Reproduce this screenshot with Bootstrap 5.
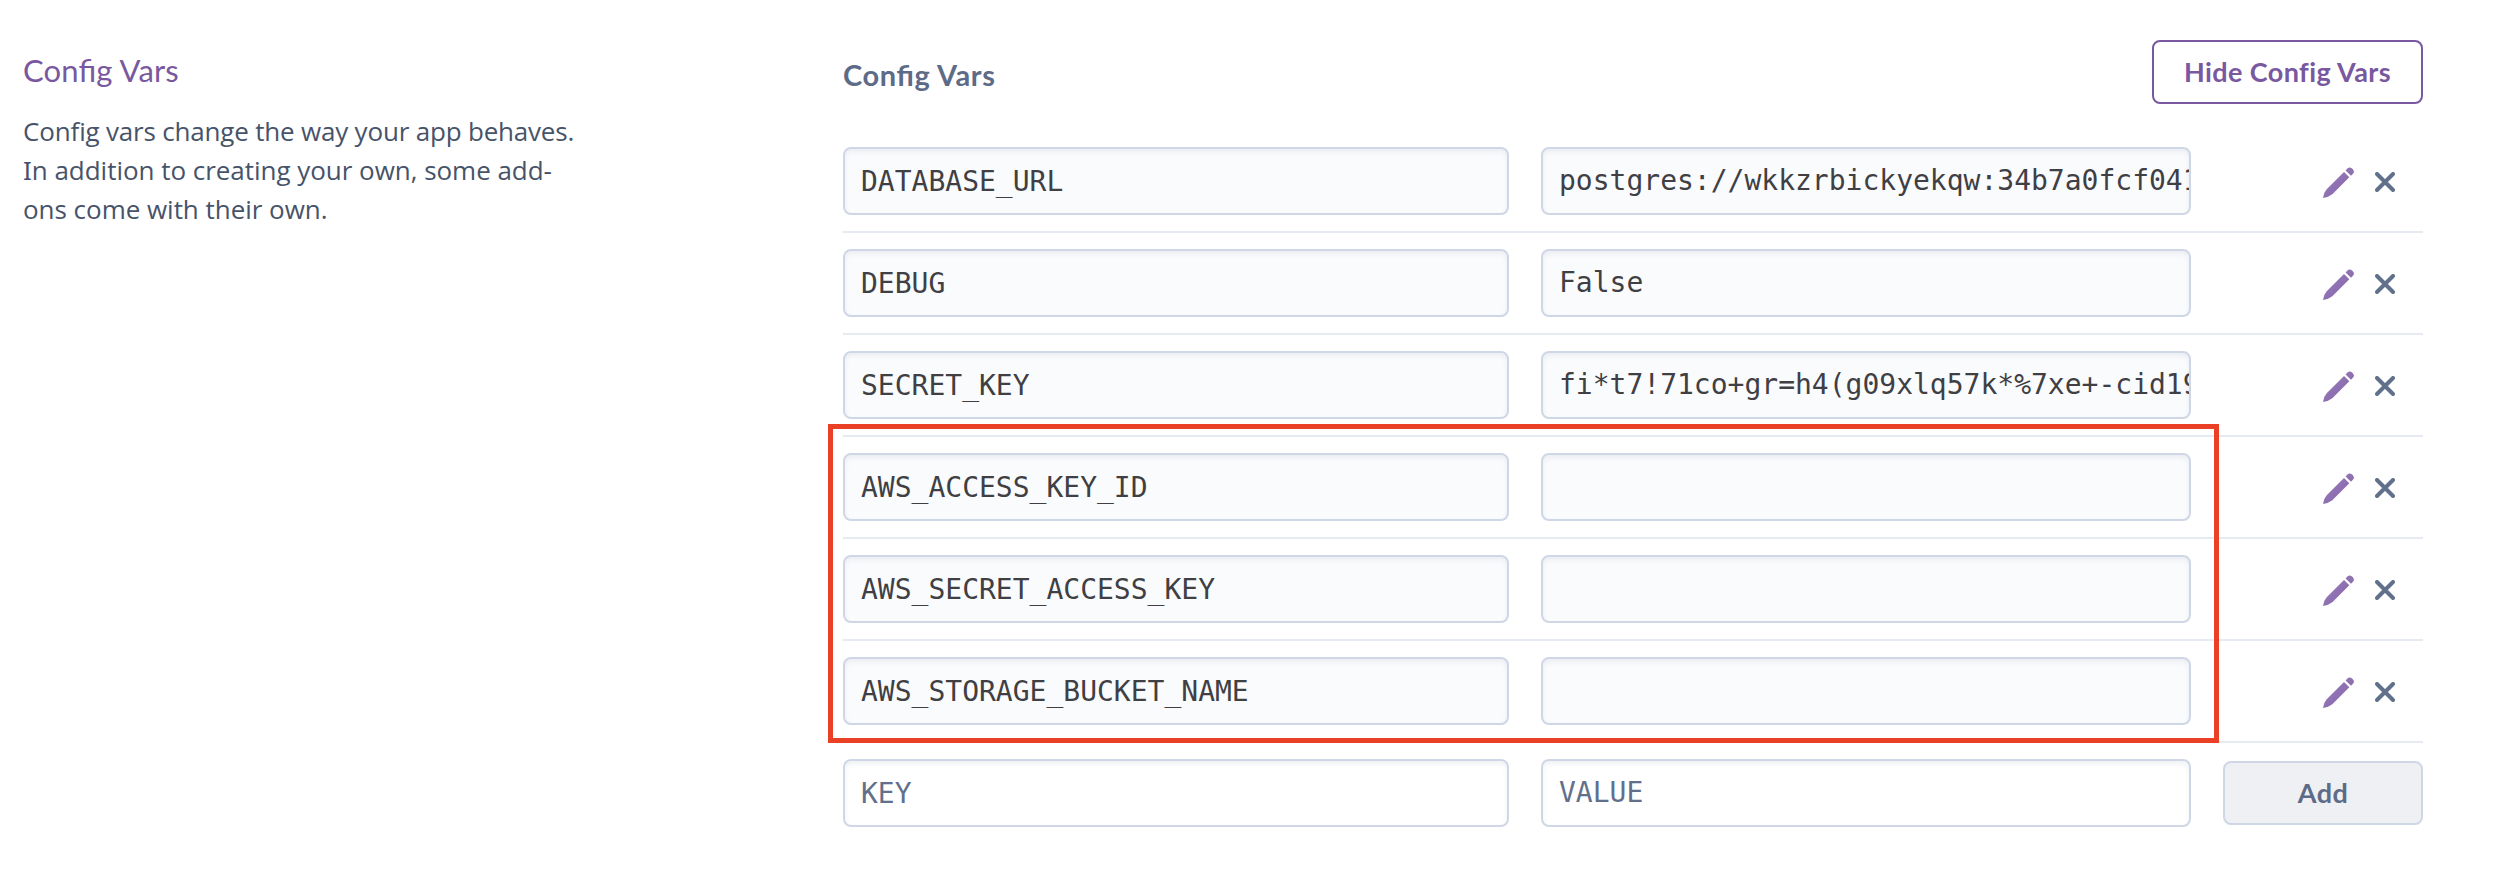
<!DOCTYPE html>
<html lang="en">
<head>
<meta charset="utf-8">
<title>Config Vars</title>
<link rel="stylesheet" href="https://cdn.jsdelivr.net/npm/bootstrap@5.3.0/dist/css/bootstrap.min.css">
<style>
body{font-family:"Open Sans",Lato,sans-serif;font-size:26px;line-height:39px;color:#475369;background:#fff;font-feature-settings:"liga" 1,"kern" 1}
.page-wrap{padding:40px 81px 0 23px}
.intro{width:570px;margin-right:250px}
.intro h2{font-family:Lato,sans-serif;font-size:31px;line-height:40px;color:#79589f;margin:10px 0 22px;font-weight:400;letter-spacing:.15px}
.intro p{letter-spacing:-.19px}
.intro .looser{letter-spacing:-.03px}
.intro .serif-cap{font-family:"Noto Sans",sans-serif;line-height:1}
.top-bar{height:64px;margin-bottom:27px}
.top-bar h3{font-family:Lato,sans-serif;font-size:29px;line-height:40px;color:#5d6b86;font-weight:700;margin:15px 0 0;letter-spacing:.6px}
.btn{font-family:Lato,sans-serif;border-width:2px;border-radius:8px;font-size:27px;font-weight:700;height:64px;line-height:38px;padding:0 0 1px;letter-spacing:.42px}
.btn-hide{width:271px;color:#79589f;border-color:#79589f;background:#fff}
.btn-add{width:200px;color:#5d6b86;border-color:#cfd7e6;background:#eef0f4}
.var-row{height:102px;padding:16px 0;border-bottom:2px solid #e6eaf1;gap:32px}
.var-row.last-row{border-color:transparent}
.var-row .form-control{font-family:"DejaVu Sans Mono",monospace;font-size:28px;line-height:40px;height:68px;border:2px solid #cfd7e6;border-radius:8px;padding:0 0 0 16px;color:#3f3f44;background:#fafbfd;box-shadow:inset 0 3px 5px rgba(80,95,130,.09)}
.var-row .key-field{width:666px;padding-top:1px}
.var-row .value-field{width:650px;padding-bottom:1px}
.var-row.last-row .form-control{background:#fff}
.form-control::placeholder{color:#62708c;opacity:1}
.row-tools{padding:2px 28px 0 0;gap:21px}
.vars-list{position:relative}
.highlight{position:absolute;left:-15px;top:293px;width:1391px;height:319px;border:5px solid #ea4025;pointer-events:none}
</style>
</head>
<body>
<svg width="0" height="0" class="position-absolute" aria-hidden="true">
<defs>
<linearGradient id="ink" x1="0" y1="0" x2="1" y2="1"><stop offset="0" stop-color="#9a80bd"/><stop offset="1" stop-color="#8462a8"/></linearGradient>
<symbol id="pencil" viewBox="0 0 31 31"><path fill="url(#ink)" d="M21 5l5.300 5.300L9.300 27.200Q5.500 30.200 0 31Q.6 25.500 3.700 22.200ZM22.600 3.400l1.800-1.900Q26.600-.8 29.400 1.700Q32.200 4.600 29.900 6.700L28 8.700Z"/></symbol>
<symbol id="cross" viewBox="0 0 20 20"><path d="M2 2l16 16M18 2L2 18" fill="none" stroke="#62718b" stroke-width="4" stroke-linecap="round"/></symbol>
</defs>
</svg>
<main class="page-wrap d-flex align-items-start">
<section class="intro flex-shrink-0">
<h2>Config Vars</h2>
<p class="mb-0">Config vars change the way your app behaves.<br><span class="looser"><span class="serif-cap">I</span>n addition to creating your own, some add-<br>ons come with their own.</span></p>
</section>
<section class="flex-grow-1">
<div class="top-bar d-flex justify-content-between align-items-start">
<h3>Config Vars</h3>
<button class="btn btn-hide" type="button">Hide Config Vars</button>
</div>
<div class="vars-list" id="vars">
<div class="highlight"></div>
</div>
</section>
</main>
<script src="https://cdn.jsdelivr.net/npm/bootstrap@5.3.0/dist/js/bootstrap.bundle.min.js"></script>
<script>
const vars = [
  ["DATABASE_URL", "postgres://wkkzrbickyekqw:34b7a0fcf041"],
  ["DEBUG", "False"],
  ["SECRET_KEY", "fi*t7!71co+gr=h4(g09xlq57k*%7xe+-cid19"],
  ["AWS_ACCESS_KEY_ID", ""],
  ["AWS_SECRET_ACCESS_KEY", ""],
  ["AWS_STORAGE_BUCKET_NAME", ""]
];
const rows = vars.map(([k, v]) => `<div class="var-row d-flex align-items-center">
<input class="form-control key-field flex-shrink-0" readonly value="${k}">
<input class="form-control value-field flex-shrink-0" readonly value="${v}">
<div class="row-tools d-flex align-items-center ms-auto"><svg width="31" height="31"><use href="#pencil"/></svg><svg width="20" height="20"><use href="#cross"/></svg></div>
</div>`).join("");
document.getElementById("vars").insertAdjacentHTML("afterbegin", rows + `<div class="var-row last-row d-flex align-items-center">
<input class="form-control key-field flex-shrink-0" placeholder="KEY">
<input class="form-control value-field flex-shrink-0" placeholder="VALUE">
<button class="btn btn-add" type="button">Add</button>
</div>`);
</script>
</body>
</html>
